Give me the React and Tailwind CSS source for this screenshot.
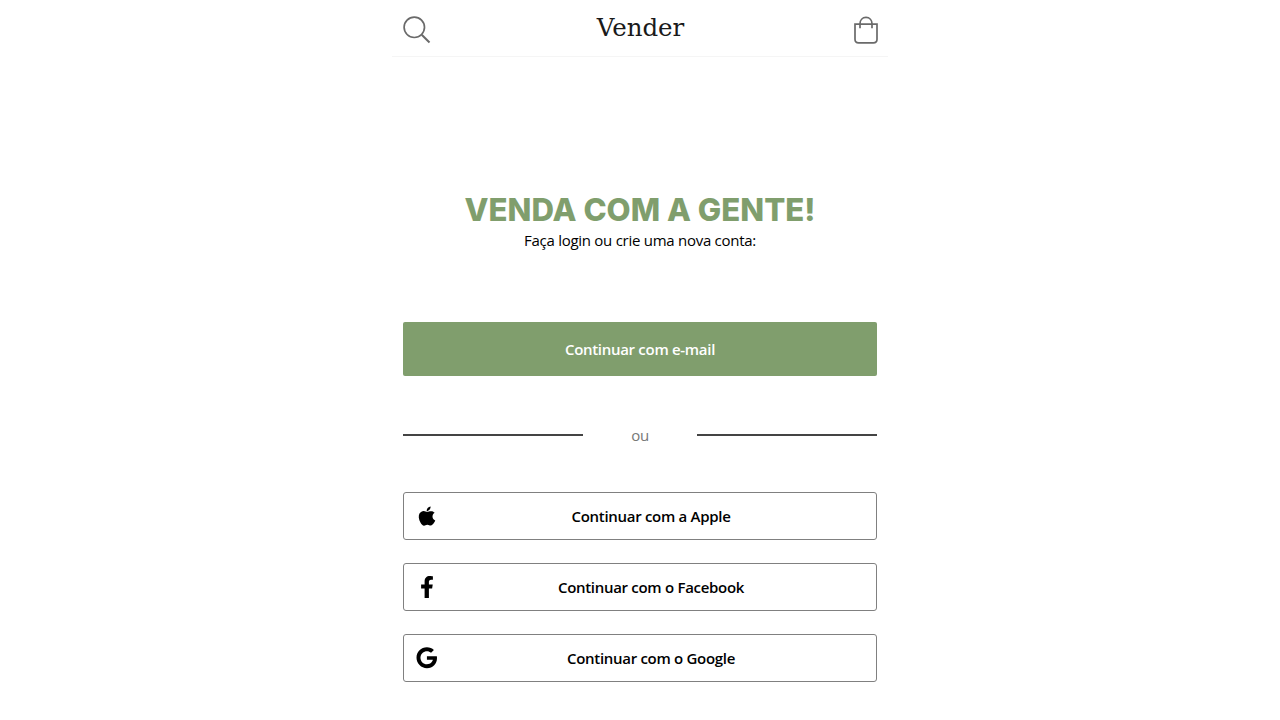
import React from 'react';
import { FaFacebookF, FaGoogle } from 'react-icons/fa';
import { IoLogoApple } from 'react-icons/io5';

const providers = [
  { name: 'a Apple', icon: <IoLogoApple className="w-[22px] h-[22px]" /> },
  { name: 'o Facebook', icon: <FaFacebookF className="w-[22px] h-[22px]" /> },
  { name: 'o Google', icon: <FaGoogle className="w-[21.5px] h-[21.5px]" /> },
];

function SearchIcon() {
  return (
    <svg className="w-[28px] h-[28px]" viewBox="0 0 28 28" fill="none" stroke="#6a6a6a" strokeWidth="1.7">
      <circle cx="11.3" cy="11.3" r="10.2" />
      <path d="M18.7 18.7L26.5 26.5" strokeWidth="2" />
    </svg>
  );
}

function BagIcon() {
  return (
    <svg className="w-[24px] h-[28px]" viewBox="0 0 24 28" fill="none" stroke="#6a6a6a" strokeWidth="1.7">
      <path d="M1 8.1H23V23.2Q23 26.8 19.4 26.8H4.6Q1 26.8 1 23.2Z" />
      <path d="M6 12.2V7.8C6 4.2 8.4 1.4 12 1.4S18 4.2 18 7.8V12.2" />
    </svg>
  );
}

function App() {
  return (
    <div className="h-screen overflow-hidden bg-white font-['Open_Sans',sans-serif] text-black">
      <div className="w-[496px] mx-auto">
        <header className="h-[57px] pl-[11px] pr-[10px] flex items-center justify-between border-b border-[#f5f5f5]">
          <button aria-label="Buscar" className="w-[28px] mt-1">
            <SearchIcon />
          </button>
          <h1 className="mr-[4px] text-[24.5px] leading-8 text-[#1a1a1a] font-['DejaVu_Serif',serif]">
            Vender
          </h1>
          <button aria-label="Sacola" className="w-[24px] mt-1">
            <BagIcon />
          </button>
        </header>

        <main className="px-[11px] pt-[133px]">
          <h2 className="h-[39px] text-center text-[31.2px] leading-10 font-extrabold text-[#809e6d] whitespace-nowrap font-['Inter',sans-serif]">
            VENDA COM A GENTE!
          </h2>
          <p className="text-center text-[15px] tracking-[-0.27px] leading-[22px]">Faça login ou crie uma nova conta:</p>

          <button className="mt-[71px] w-full h-[54px] rounded-[2px] bg-[#809e6d] text-white text-[15px] tracking-[-0.3px] font-semibold">
            Continuar com e-mail
          </button>

          <div className="mt-[47px] h-6 flex items-center justify-between">
            <div className="w-[180px] h-[2px] bg-[#444444]" />
            <span className="text-[15px] tracking-[-0.3px] leading-6 text-[#777777]">ou</span>
            <div className="w-[180px] h-[2px] bg-[#444444]" />
          </div>

          <div className="mt-[45px] flex flex-col gap-[23px]">
            {providers.map((provider) => (
              <button
                key={provider.name}
                className="h-[48px] w-full grid grid-cols-[45px_1fr_23px] items-center rounded-[3px] border border-[#808080] text-[15px] tracking-[-0.3px] font-semibold"
              >
                <span className="flex justify-center">{provider.icon}</span>
                <span>Continuar com {provider.name}</span>
              </button>
            ))}
          </div>
        </main>
      </div>
    </div>
  );
}

export default App;
